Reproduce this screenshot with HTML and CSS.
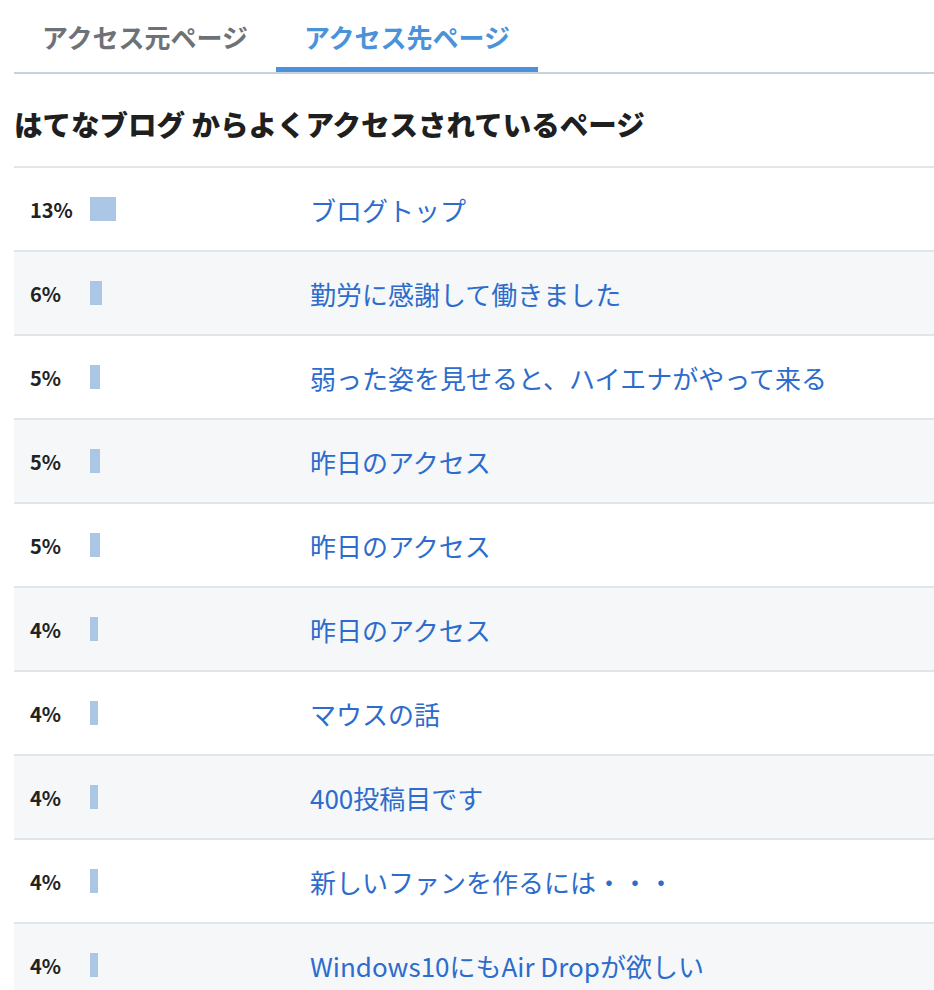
FILE: index.html
```html
<!DOCTYPE html>
<html lang="ja">
<head>
    <meta charset="UTF-8">
    <meta name="viewport" content="width=device-width, initial-scale=1.0">
    <title>アクセス解析</title>
    <link rel="stylesheet" href="styles.css">
</head>
<body>
    <div class="panel">
        <div class="tabs">
            <a class="tab">アクセス元ページ</a>
            <a class="tab active">アクセス先ページ</a>
        </div>

        <h2 class="panel-title">はてなブログ からよくアクセスされているページ</h2>

        <ul class="page-list">
            <li class="page-row">
                <div class="rate"><span class="percent">13%</span><span class="bar" style="width: 26px;"></span></div>
                <a class="page-link" href="#">ブログトップ</a>
            </li>
            <li class="page-row">
                <div class="rate"><span class="percent">6%</span><span class="bar" style="width: 12px;"></span></div>
                <a class="page-link" href="#">勤労に感謝して働きました</a>
            </li>
            <li class="page-row">
                <div class="rate"><span class="percent">5%</span><span class="bar" style="width: 10px;"></span></div>
                <a class="page-link" href="#">弱った姿を見せると、ハイエナがやって来る</a>
            </li>
            <li class="page-row">
                <div class="rate"><span class="percent">5%</span><span class="bar" style="width: 10px;"></span></div>
                <a class="page-link" href="#">昨日のアクセス</a>
            </li>
            <li class="page-row">
                <div class="rate"><span class="percent">5%</span><span class="bar" style="width: 10px;"></span></div>
                <a class="page-link" href="#">昨日のアクセス</a>
            </li>
            <li class="page-row">
                <div class="rate"><span class="percent">4%</span><span class="bar" style="width: 8px;"></span></div>
                <a class="page-link" href="#">昨日のアクセス</a>
            </li>
            <li class="page-row">
                <div class="rate"><span class="percent">4%</span><span class="bar" style="width: 8px;"></span></div>
                <a class="page-link" href="#">マウスの話</a>
            </li>
            <li class="page-row">
                <div class="rate"><span class="percent">4%</span><span class="bar" style="width: 8px;"></span></div>
                <a class="page-link" href="#">400投稿目です</a>
            </li>
            <li class="page-row">
                <div class="rate"><span class="percent">4%</span><span class="bar" style="width: 8px;"></span></div>
                <a class="page-link" href="#">新しいファンを作るには・・・</a>
            </li>
            <li class="page-row">
                <div class="rate"><span class="percent">4%</span><span class="bar" style="width: 8px;"></span></div>
                <a class="page-link" href="#">Windows10にもAir Dropが欲しい</a>
            </li>
        </ul>
    </div>
</body>
</html>
```

FILE: styles.css
```css
body {
    margin: 0;
    font-family: "Noto Sans CJK JP", "Noto Sans", sans-serif;
    color: #222;
    background-color: #fff;
}

.panel {
    margin-left: 14px;
}

/* tab bar */
.tabs {
    display: flex;
    border-bottom: 2px solid #c9d1d9;
}

.tab {
    box-sizing: border-box;
    width: 262px;
    height: 72px;
    padding: 19px 0 0;
    text-align: center;
    font-size: 26px;
    font-weight: bold;
    line-height: 36px;
    color: #6e7276;
    border-bottom: 5px solid transparent;
    cursor: pointer;
}

.tab.active {
    color: #4a92da;
    border-bottom-color: #4a92da;
}

.panel-title {
    margin: 0;
    padding: 30px 0 22px;
    font-size: 28.5px;
    font-weight: 900;
    line-height: 40px;
    color: #1f1f1f;
}

/* ranking rows */
.page-list {
    list-style: none;
    margin: 0;
    padding: 0;
}

.page-row {
    display: flex;
    align-items: center;
    height: 82px;
    padding-left: 16px;
    border-top: 2px solid #e1e6ea;
}

.page-row:nth-child(even) {
    background-color: #f5f7f9;
}

.rate {
    display: flex;
    align-items: center;
    width: 280px;
    flex-shrink: 0;
}

.percent {
    width: 60px;
    font-size: 20px;
    font-weight: bold;
    color: #222;
}

.bar {
    display: inline-block;
    height: 24px;
    background-color: #abc7e5;
}

.page-link {
    font-size: 26px;
    color: #2d6ccc;
    text-decoration: none;
}

.page-link:hover {
    text-decoration: underline;
}
```
